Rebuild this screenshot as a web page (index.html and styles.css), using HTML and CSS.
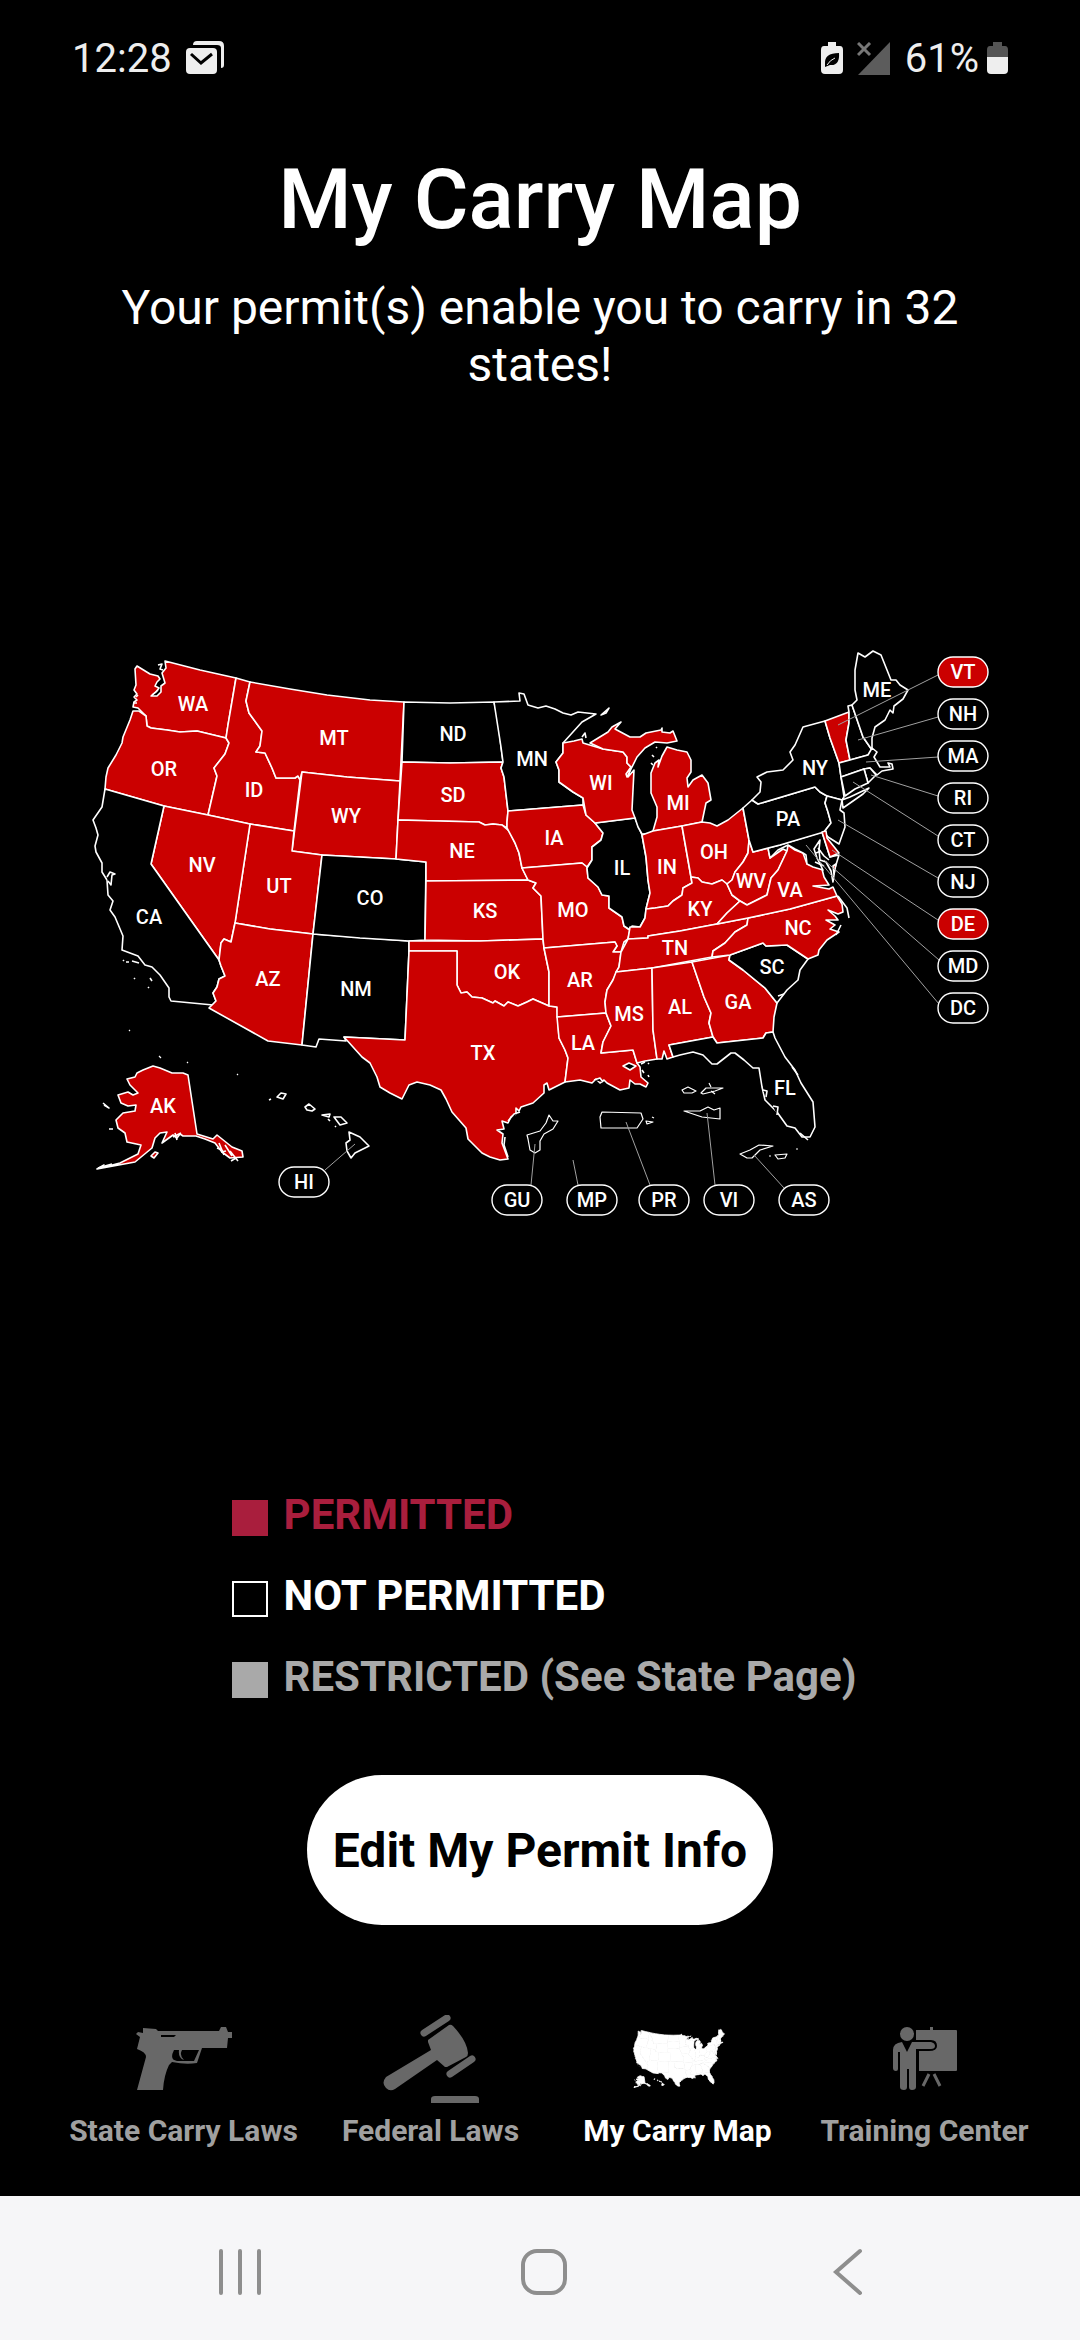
FILE: index.html
```
<!DOCTYPE html>
<html lang="en">
<head>
    <title>My Carry Map</title>
    <meta charset="UTF-8">
    <meta name="viewport" content="width=device-width, initial-scale=1">
    <link rel="stylesheet" href="styles.css">
</head>
<body>
    <div class="status-bar">
        <div class="status-side">
            <span>12:28</span>
            <svg class="status-mail" viewBox="0 0 38 34">
                <path d="M7 4 Q7 0 11 0 H33 Q38 0 38 5 V24 Q38 27 35 27 V7 Q35 4 31 4 Z" fill="#eee"/>
                <rect x="0" y="7" width="31" height="26" rx="4" fill="#eee"/>
                <path d="M5 13 L15 22 L26 13" fill="none" stroke="#000" stroke-width="3"/>
            </svg>
        </div>
        <div class="status-side">
            <svg class="status-saver" viewBox="0 0 22 32">
                <path d="M7 0 H15 V4 H19 Q22 4 22 8 V28 Q22 32 18 32 H4 Q0 32 0 28 V8 Q0 4 3 4 H7 Z" fill="#eee"/>
                <path d="M4 22 Q3 11 18 11 Q19 24 9 23 L4 25 Z" fill="#000"/>
                <path d="M6 23 Q9 18 14 16" fill="none" stroke="#eee" stroke-width="1"/>
            </svg>
            <svg class="status-signal" viewBox="0 0 34 33">
                <path d="M33 0 V33 H1 Z" fill="#5c5c5c"/>
                <path d="M1 1 L13 13 M13 1 L1 13" stroke="#777" stroke-width="3"/>
            </svg>
            <span>61%</span>
            <svg class="status-battery" viewBox="0 0 21 32">
                <path d="M6 0 H15 V4 H18 Q21 4 21 8 V15 H0 V8 Q0 4 3 4 H6 Z" fill="#555"/>
                <path d="M0 15 H21 V28 Q21 32 17 32 H4 Q0 32 0 28 Z" fill="#eee"/>
            </svg>
        </div>
    </div>

    <main>
        <h1>My Carry Map</h1>
        <p class="summary">Your permit(s) enable you to carry in 32 states!</p>

        <svg class="map" viewBox="0 640 1080 600" role="img" aria-label="Carry map of the United States">
            <g id="states">
                <!-- west -->
                <path class="on" d="M137 666 L135 669 L136 685 L134 690 L137 694 L134 697 L137 700 L134 702 L133 707 L138 708 L142 712 L146 716 L147 726 L151 728 L167 730 L180 732 L197 731 L226 738 L228 725 L236 678 L200 670 L165 661 L166 668 L162 673 L165 683 L161 686 L161 692 L157 696 L151 696 L156 692 L159 688 L155 686 L157 682 L160 679 L158 676 L150 674 Z"/>
                <path class="off" d="M158 665 L162 664 L160 669 L163 670 M133 703 L137 703 M152 695 L158 690 M136 697 L138 695"/>
                <path class="on" d="M133 711 L130 720 L123 737 L122 743 L116 755 L108 768 L106 777 L105 789 L164 806 L208 815 L217 776 L214 768 L225 754 L229 743 L226 738 L197 731 L180 732 L167 730 L151 728 L147 726 L146 716 L139 711 Z"/>
                <path class="on" d="M236 678 L250 682 L246 701 L249 713 L262 731 L260 746 L256 752 L265 753 L272 768 L276 778 L295 778 L298 776 L300 780 L294 831 L250 824 L208 815 L217 776 L214 768 L225 754 L229 743 L226 738 L228 725 Z"/>
                <path class="on" d="M250 682 L290 689 L327 695 L370 700 L404 702 L400 781 L347 777 L302 772 L300 780 L298 776 L295 778 L276 778 L272 768 L265 753 L256 752 L260 746 L262 731 L249 713 L246 701 Z"/>
                <path class="on" d="M302 772 L347 777 L400 781 L396 859 L322 855 L292 851 Z"/>
                <path class="on" d="M250 824 L294 831 L292 851 L322 855 L313 934 L270 929 L235 923 Z"/>
                <path class="on" d="M164 806 L208 815 L250 824 L235 923 L231 942 L224 939 L221 943 L219 960 L151 864 Z"/>
                <path class="off" d="M105 789 L164 806 L151 864 L219 960 L221 966 L225 976 L219 979 L217 987 L213 993 L216 1001 L213 1005 L171 1001 L169 997 L169 988 L160 975 L152 967 L145 965 L138 956 L122 950 L123 936 L115 917 L110 910 L113 901 L108 895 L107 880 L102 872 L102 863 L96 852 L95 846 L98 835 L96 828 L93 820 L102 807 Z"/>
                <path class="off" d="M107 877 L110 872 L115 874 L112 875 L111 885 L108 881"/>
                <path class="on" d="M235 923 L270 929 L313 934 L302 1045 L268 1041 L209 1008 L216 1001 L213 993 L217 987 L219 979 L225 976 L221 966 L219 960 L221 943 L224 939 L231 942 Z"/>
                <path class="off" d="M313 934 L409 941 L409 951 L405 1040 L344 1037 L346 1041 L319 1039 L316 1047 L302 1045 Z"/>
                <path class="off" d="M322 855 L396 859 L426 862 L425 940 L409 941 L360 938 L313 934 Z"/>
                <!-- plains -->
                <path class="off" d="M404 702 L450 703 L494 702 L498 720 L501 747 L503 762 L450 763 L402 762 Z"/>
                <path class="on" d="M402 762 L450 763 L503 762 L501 768 L504 777 L508 811 L507 822 L507 828 L502 825 L493 824 L485 825 L479 822 L398 820 Z"/>
                <path class="on" d="M398 820 L479 822 L485 825 L493 824 L502 825 L509 831 L515 843 L519 853 L522 868 L528 880 L426 881 L426 862 L396 859 Z"/>
                <path class="on" d="M426 881 L528 880 L536 883 L533 888 L541 896 L543 939 L480 941 L425 940 Z"/>
                <path class="on" d="M409 941 L480 941 L543 939 L544 948 L549 972 L549 1006 L533 999 L527 1002 L518 1006 L508 1002 L504 1006 L495 1001 L493 1003 L482 998 L472 997 L467 992 L461 993 L457 985 L457 951 L409 951 Z"/>
                <path class="on" d="M409 951 L457 951 L457 985 L461 993 L467 992 L472 997 L482 998 L493 1003 L495 1001 L504 1006 L508 1002 L518 1006 L527 1002 L533 999 L549 1006 L557 1007 L559 1038 L565 1050 L568 1058 L565 1082 L549 1090 L547 1083 L544 1085 L544 1093 L533 1103 L521 1107 L519 1111 L516 1108 L516 1114 L511 1117 L508 1123 L502 1121 L504 1129 L497 1130 L503 1134 L502 1143 L508 1159 L500 1160 L490 1157 L482 1153 L468 1139 L466 1128 L452 1112 L446 1099 L441 1090 L430 1085 L417 1082 L409 1085 L402 1099 L390 1093 L380 1087 L377 1077 L370 1063 L362 1057 L344 1037 L405 1040 Z"/>
                <path class="off" d="M505 1137 L504 1145 L508 1157 M508 1121 L514 1114 L520 1112"/>
                <!-- midwest -->
                <path class="off" d="M494 702 L520 701 L519 693 L524 694 L528 705 L538 708 L546 706 L555 709 L563 713 L571 715 L578 712 L596 714 L582 722 L563 743 L563 753 L556 762 L559 770 L559 782 L573 792 L583 798 L583 805 L508 811 L504 777 L501 768 L503 762 L501 747 Z"/>
                <path class="on" d="M508 811 L583 805 L586 815 L595 823 L603 833 L601 840 L592 847 L592 860 L587 867 L582 863 L522 868 L519 853 L515 843 L507 828 L507 822 Z"/>
                <path class="on" d="M522 868 L582 863 L587 867 L588 878 L598 887 L602 895 L609 896 L609 908 L622 917 L624 926 L630 930 L628 939 L624 942 L621 952 L613 952 L617 946 L615 942 L544 948 L543 939 L541 896 L533 888 L536 883 L528 880 Z"/>
                <path class="on" d="M544 948 L615 942 L617 946 L613 952 L621 952 L619 967 L613 980 L607 990 L605 1002 L606 1013 L557 1017 L557 1007 L549 1006 L549 972 Z"/>
                <path class="on" d="M557 1017 L606 1013 L611 1026 L603 1042 L601 1053 L633 1050 L637 1063 L640 1067 L641 1077 L648 1083 L646 1087 L640 1084 L635 1084 L630 1080 L629 1088 L620 1090 L607 1083 L604 1080 L600 1083 L596 1079 L592 1083 L580 1080 L565 1082 L568 1058 L565 1050 L559 1038 Z"/>
                <path class="off" d="M623 1066 L629 1063 L636 1066 L630 1070 Z M594 1080 L600 1078 L603 1082 M641 1064 L645 1062 M642 1070 L644 1073 M648 1063 L649 1064 M648 1075 L649 1077"/>
                <path class="off" d="M595 823 L635 818 L642 835 L646 857 L648 880 L650 893 L646 909 L645 918 L640 927 L632 926 L630 930 L624 926 L622 917 L609 908 L609 896 L602 895 L598 887 L588 878 L587 868 L592 860 L592 847 L601 840 L603 833 Z"/>
                <path class="on" d="M563 743 L574 741 L582 739 L583 743 L603 749 L623 752 L627 757 L627 763 L631 767 L628 777 L634 770 L633 790 L632 810 L635 818 L595 823 L586 815 L583 798 L573 792 L559 782 L559 770 L556 762 L563 753 Z"/>
                <path class="on" d="M590 743 L608 732 L612 727 L621 722 L615 729 L630 737 L640 737 L646 733 L661 730 L662 728 L662 732 L670 733 L673 731 L677 741 L667 743 L655 742 L645 748 L637 757 L627 777 L626 774 L631 767 L627 763 L627 757 L623 752 L603 749 Z"/>
                <path class="on" d="M667 747 L677 750 L687 752 L691 760 L691 772 L687 778 L688 787 L693 780 L702 775 L708 783 L711 800 L706 803 L702 822 L682 826 L653 831 L657 817 L657 807 L651 793 L651 773 L655 763 L659 760 L658 767 L662 756 Z"/>
                <path class="on" d="M601 715 L609 708 L606 713 Z"/>
                <path class="off" d="M656 747 L657 748 M652 755 L654 757 M651 763 L653 765 M582 737 L585 733 L586 738 M635 818 L638 827 L642 834 L648 834 L653 831"/>
                <path class="on" d="M642 835 L653 831 L682 826 L692 883 L683 888 L682 895 L673 901 L668 906 L655 908 L646 909 L650 893 L648 880 L646 857 Z"/>
                <path class="on" d="M682 826 L702 822 L710 823 L717 826 L728 820 L743 808 L749 840 L748 853 L743 862 L735 872 L732 880 L727 884 L722 880 L712 884 L702 882 L698 878 L691 877 Z"/>
                <path class="on" d="M630 927 L640 927 L645 918 L646 909 L655 908 L668 906 L673 901 L682 895 L683 888 L692 883 L691 877 L698 878 L702 882 L712 884 L722 880 L727 884 L732 895 L740 901 L727 913 L717 924 L680 931 L648 936 L648 938 L628 939 Z"/>
                <path class="on" d="M628 939 L648 938 L648 936 L680 931 L717 924 L748 918 L747 925 L735 932 L725 943 L713 951 L712 957 L652 968 L616 972 L619 967 L621 952 Z"/>
                <!-- south -->
                <path class="on" d="M616 972 L652 968 L653 1030 L657 1059 L645 1061 L637 1063 L633 1050 L601 1053 L603 1042 L611 1026 L606 1013 L605 1002 L607 990 L613 980 Z"/>
                <path class="on" d="M652 968 L692 962 L704 997 L711 1013 L709 1023 L713 1037 L669 1045 L673 1057 L667 1059 L664 1051 L662 1059 L657 1059 L653 1030 Z"/>
                <path class="on" d="M692 962 L730 955 L729 960 L743 970 L765 988 L777 1003 L774 1017 L773 1032 L766 1033 L763 1038 L717 1043 L713 1037 L709 1023 L711 1013 L704 997 Z"/>
                <path class="off" d="M669 1045 L713 1037 L717 1043 L763 1038 L766 1033 L773 1032 L775 1038 L785 1057 L795 1070 L801 1083 L813 1102 L815 1127 L810 1137 L802 1137 L795 1128 L787 1126 L777 1112 L765 1100 L762 1087 L759 1068 L753 1068 L744 1060 L735 1053 L731 1053 L717 1064 L712 1064 L703 1055 L693 1052 L680 1055 L673 1057 Z"/>
                <path class="off" d="M792 1067 L798 1075 M763 1090 L767 1091 L766 1097 M773 1106 L778 1107 L777 1115 M800 1133 L808 1140"/>
                <path class="off" d="M730 955 L763 943 L766 946 L787 945 L808 959 L800 970 L798 980 L787 990 L777 1003 L765 988 L743 970 L729 960 Z"/>
                <path class="on" d="M748 918 L790 909 L837 896 L842 904 L843 912 L838 914 L828 910 L835 916 L838 920 L826 920 L835 925 L830 929 L839 932 L827 940 L819 950 L818 955 L808 959 L787 945 L766 946 L763 943 L730 955 L712 957 L713 951 L725 943 L735 932 L747 925 Z"/>
                <path class="line" d="M838 896 L847 908 L849 918 M841 925 L836 935 M778 996 L784 994"/>
                <path class="on" d="M749 840 L753 852 L768 848 L770 858 L783 849 L787 851 L778 870 L771 878 L767 895 L747 905 L740 901 L732 895 L727 884 L732 880 L735 872 L743 862 L748 853 Z"/>
                <path class="on" d="M717 924 L727 913 L740 901 L747 905 L767 895 L771 878 L778 870 L787 851 L788 845 L795 850 L803 853 L807 864 L822 869 L824 877 L829 885 L813 886 L829 889 L833 887 L837 896 L790 909 L748 918 Z"/>
                <path class="off" d="M768 848 L780 845 L822 832 L830 857 L839 855 L835 868 L833 882 L831 871 L826 862 L820 860 L819 850 L820 840 L814 849 L817 858 L823 870 L813 867 L807 864 L806 855 L803 853 L795 849 L788 845 L778 850 L770 858 Z"/>
                <path class="line" d="M818 848 L824 856 L829 860 M815 862 L824 866 M816 853 L821 851"/>
                <path class="on" d="M833 866 L836 864 L834 874 Z"/>
                <!-- northeast -->
                <path class="off" d="M743 808 L752 800 L758 804 L815 787 L820 792 L827 796 L825 803 L828 812 L831 823 L824 832 L780 845 L753 852 L749 840 Z"/>
                <path class="off" d="M752 800 L760 792 L761 782 L757 777 L767 772 L783 770 L793 760 L790 752 L795 745 L803 727 L825 721 L830 738 L839 763 L841 777 L844 797 L842 800 L850 797 L869 788 L863 794 L843 808 L842 800 L827 796 L820 792 L815 787 L758 804 Z"/>
                <path class="on" d="M825 721 L849 712 L849 723 L846 740 L850 760 L839 763 L830 738 Z"/>
                <path class="off" d="M849 712 L848 706 L852 705 L863 737 L872 750 L868 755 L850 760 L846 740 L849 723 Z"/>
                <path class="off" d="M852 705 L857 700 L855 690 L855 670 L858 653 L865 657 L873 651 L881 655 L891 680 L896 680 L900 685 L908 690 L903 699 L894 706 L893 713 L890 710 L885 720 L875 727 L872 738 L872 750 L863 737 Z"/>
                <path class="off" d="M839 763 L850 760 L868 755 L872 748 L877 752 L874 757 L880 767 L890 767 L888 763 L892 764 L893 769 L882 771 L877 775 L870 768 L864 769 L841 777 Z"/>
                <path class="off" d="M864 769 L870 768 L876 775 L868 783 Z"/>
                <path class="off" d="M841 777 L864 769 L868 783 L855 789 L845 796 Z"/>
                <path class="off" d="M827 796 L842 800 L840 810 L844 813 L845 827 L839 844 L828 837 L824 832 L831 823 L828 812 L825 803 Z"/>
                <path class="on" d="M822 832 L826 831 L827 838 L839 853 L830 857 Z"/>
                <!-- alaska and hawaii -->
                <path class="on" d="M153 1066 L143 1070 L137 1073 L135 1077 L127 1079 L130 1085 L138 1093 L133 1095 L128 1092 L118 1095 L121 1103 L128 1106 L136 1105 L135 1111 L123 1113 L116 1120 L118 1128 L125 1133 L127 1142 L141 1145 L138 1154 L120 1163 L97 1169 L104 1165 L97 1169 L135 1162 L152 1148 L155 1138 L160 1133 L167 1132 L162 1143 L173 1135 L177 1138 L180 1134 L183 1136 L196 1136 L205 1139 L215 1143 L222 1152 L230 1158 L243 1157 L242 1151 L232 1147 L217 1135 L213 1139 L197 1134 L188 1075 L183 1073 L172 1073 L160 1068 Z"/>
                <path class="on" d="M151 1156 L155 1152 L158 1153 L154 1158 Z"/>
                <path class="line" d="M219 1143 L224 1155 M225 1145 L232 1156 M230 1151 L238 1161 M217 1148 L222 1150 M221 1152 L226 1151 M231 1161 L236 1158 M103 1103 L109 1108 L104 1105 M109 1129 L113 1129 M173 1137 L181 1133 M175 1133 L177 1140 M98 1168 L112 1164"/>
                <path class="off" d="M277 1097 L281 1093 L286 1094 L283 1099 Z M305 1107 L309 1104 L315 1109 L312 1111 L307 1110 Z M322 1115 L330 1114 L329 1117 Z M328 1119 L330 1121 M334 1117 L341 1117 L347 1123 L340 1125 Z M335 1126 L336 1127 M269 1100 L271 1099 M349 1132 L360 1137 L369 1146 L355 1153 L351 1158 L347 1151 L346 1143 L350 1140 Z"/>
                <path class="line" d="M123 960 L124 961 M126 962 L129 962 M132 961 L139 963 M134 978 L135 979 M150 978 L152 981 M148 987 L149 988"/>
            </g>

            <!-- outlying islands and territories -->
            <g class="territories">
                <path d="M129 1030 L130 1031 M159 1056 L161 1058 M187 1062 L188 1063 M237 1074 L238 1075"/>
                <path d="M549 1115 L553 1121 L558 1121 L553 1129 L544 1134 L540 1141 L540 1150 L535 1153 L530 1150 L528 1139 L527 1135 L540 1131 L546 1123 Z"/>
                <path d="M602 1112 L641 1113 L643 1119 L637 1128 L601 1128 L600 1117 Z M646 1121 L653 1122 L647 1124 Z M652 1117 L654 1118"/>
                <path d="M682 1090 L688 1087 L696 1091 L692 1093 L684 1093 Z M701 1093 L706 1088 L723 1088 L715 1091 L703 1094 Z M709 1083 L711 1087 M711 1091 L715 1094 M684 1111 L700 1111 L708 1107 L714 1110 L720 1108 L720 1119 L702 1117 Z"/>
                <path d="M740 1154 L750 1150 L759 1145 L773 1146 L760 1150 L752 1158 L747 1158 Z M775 1155 L787 1154 L785 1158 L778 1159 Z M796 1149 L798 1149 M769 1156 L771 1156"/>
            </g>

            <g class="leaders">
                <path d="M838 725 L938 675"/>
                <path d="M858 740 L938 717"/>
                <path d="M866 762 L938 757"/>
                <path d="M871 775 L938 796"/>
                <path d="M853 782 L938 836"/>
                <path d="M838 820 L938 878"/>
                <path d="M832 850 L938 920"/>
                <path d="M824 860 L939 960"/>
                <path d="M806 845 L939 1004"/>
                <path d="M355 1144 L325 1170"/>
                <path d="M535 1144 L531 1185"/>
                <path d="M573 1160 L578 1185"/>
                <path d="M626 1122 L650 1185"/>
                <path d="M707 1113 L715 1185"/>
                <path d="M754 1155 L784 1188"/>
            </g>

            <g class="pills">
                <rect class="on" x="938" y="657" width="50" height="30" rx="15"/>
                <rect x="938" y="699" width="50" height="30" rx="15"/>
                <rect x="938" y="741" width="50" height="30" rx="15"/>
                <rect x="938" y="783" width="50" height="30" rx="15"/>
                <rect x="938" y="825" width="50" height="30" rx="15"/>
                <rect x="938" y="867" width="50" height="30" rx="15"/>
                <rect class="on" x="938" y="909" width="50" height="30" rx="15"/>
                <rect x="938" y="951" width="50" height="30" rx="15"/>
                <rect x="938" y="993" width="50" height="30" rx="15"/>
                <rect x="279" y="1167" width="50" height="30" rx="15"/>
                <rect x="492" y="1185" width="50" height="30" rx="15"/>
                <rect x="567" y="1185" width="50" height="30" rx="15"/>
                <rect x="639" y="1185" width="50" height="30" rx="15"/>
                <rect x="704" y="1185" width="50" height="30" rx="15"/>
                <rect x="779" y="1185" width="50" height="30" rx="15"/>
            </g>

            <g class="labels">
                <text x="193" y="711">WA</text>
                <text x="164" y="776">OR</text>
                <text x="254" y="797">ID</text>
                <text x="334" y="745">MT</text>
                <text x="346" y="823">WY</text>
                <text x="202" y="872">NV</text>
                <text x="279" y="893">UT</text>
                <text x="370" y="905">CO</text>
                <text x="149" y="924">CA</text>
                <text x="268" y="986">AZ</text>
                <text x="356" y="996">NM</text>
                <text x="163" y="1113">AK</text>
                <text x="453" y="741">ND</text>
                <text x="532" y="766">MN</text>
                <text x="453" y="802">SD</text>
                <text x="601" y="790">WI</text>
                <text x="678" y="810">MI</text>
                <text x="462" y="858">NE</text>
                <text x="554" y="845">IA</text>
                <text x="622" y="875">IL</text>
                <text x="667" y="874">IN</text>
                <text x="485" y="918">KS</text>
                <text x="573" y="917">MO</text>
                <text x="507" y="979">OK</text>
                <text x="580" y="987">AR</text>
                <text x="483" y="1060">TX</text>
                <text x="583" y="1050">LA</text>
                <text x="629" y="1021">MS</text>
                <text x="680" y="1014">AL</text>
                <text x="675" y="955">TN</text>
                <text x="714" y="859">OH</text>
                <text x="788" y="826">PA</text>
                <text x="751" y="888">WV</text>
                <text x="790" y="897">VA</text>
                <text x="700" y="916">KY</text>
                <text x="798" y="935">NC</text>
                <text x="772" y="974">SC</text>
                <text x="738" y="1009">GA</text>
                <text x="785" y="1095">FL</text>
                <text x="815" y="775">NY</text>
                <text x="877" y="697">ME</text>
                <text x="963" y="679">VT</text>
                <text x="963" y="721">NH</text>
                <text x="963" y="763">MA</text>
                <text x="963" y="805">RI</text>
                <text x="963" y="847">CT</text>
                <text x="963" y="889">NJ</text>
                <text x="963" y="931">DE</text>
                <text x="963" y="973">MD</text>
                <text x="963" y="1015">DC</text>
                <text x="304" y="1189">HI</text>
                <text x="517" y="1207">GU</text>
                <text x="592" y="1207">MP</text>
                <text x="664" y="1207">PR</text>
                <text x="729" y="1207">VI</text>
                <text x="804" y="1207">AS</text>
            </g>
        </svg>

        <ul class="legend">
            <li class="permitted">PERMITTED</li>
            <li class="not-permitted">NOT PERMITTED</li>
            <li class="restricted">RESTRICTED (See State Page)</li>
        </ul>

        <button class="edit-button" type="button">Edit My Permit Info</button>
    </main>

    <nav class="tabs">
        <a href="#state-laws">
            <svg viewBox="0 0 96 88">
                <path fill-rule="evenodd" d="M7 13 L20 14 L22 16 H83 L85 12 H90 L92 17 H96 V23 H92 L91 33 H66 L61 48 Q50 50 36 47 L33 50 Q28 60 27 75 H1 L10 42 Q10 37 1 34 L4 22 L0 19 L2 17 L7 18 Z M25 20 V22 H38 L40 20 Z M38 35 Q33 45 41 46 L58 46 L63 35 H46 Q43 40 48 45 Q42 43 43 35 Z"/>
            </svg>
            <span>State Carry Laws</span>
        </a>
        <a href="#federal-laws">
            <svg viewBox="0 0 96 88">
                <path d="M41 18 L64 3 M67 59 L89 44" fill="none" stroke="#686868" stroke-width="7" stroke-linecap="round"/>
                <path d="M45 25 L66 10 Q68 9 70 11 Q84 26 85 38 Q85 41 83 42 L64 52 L62 52 L54 45 L12 74 Q7 77 3 73 Q-2 68 3 62 L48 35 L45 27 Z"/>
                <path d="M48 88 V84 Q48 81 52 81 H92 Q96 81 96 84 V88 Z"/>
            </svg>
            <span>Federal Laws</span>
        </a>
        <a href="#carry-map" class="active">
            <svg viewBox="62 522 860 788">
                <use href="#states"/>
            </svg>
            <span>My Carry Map</span>
        </a>
        <a href="#training">
            <svg viewBox="0 0 96 88">
                <path d="M53 15 V12 H56 V15 H79 Q80 15 80 16 V55 Q80 56 79 56 H42 V36 H52 Q60 36 60 31 Q60 25 54 25 H39 L39 15 Z"/>
                <circle cx="30" cy="19" r="7"/>
                <path d="M25 27 L30 37 L35 27 H54 Q58 28 58 31 Q58 34 54 34 H39 V72 Q39 75 35 75 Q32 75 32 72 V54 H30 V72 Q30 75 27 75 Q23 75 23 72 V37 H21 V54 Q21 56 19 56 Q16 56 16 53 V35 Q16 28 25 27 Z"/>
                <path d="M52 59 L46 71 M57 59 L63 71" stroke="#686868" stroke-width="3"/>
            </svg>
            <span>Training Center</span>
        </a>
    </nav>

    <div class="system-nav">
        <button type="button" aria-label="Recents">
            <svg viewBox="0 0 48 48"><path d="M5 3 V45 M24 3 V45 M43 3 V45"/></svg>
        </button>
        <button type="button" aria-label="Home">
            <svg viewBox="0 0 48 48"><rect x="3" y="3" width="42" height="42" rx="14"/></svg>
        </button>
        <button type="button" aria-label="Back">
            <svg viewBox="0 0 48 48"><path d="M36 3 L12 24 L36 45"/></svg>
        </button>
    </div>
</body>
</html>
```

FILE: styles.css
```
*,
*::before {
    box-sizing: border-box;
}
body {
    margin: 0;
    min-height: 100vh;
    display: flex;
    flex-direction: column;
    background: #000;
    color: #fff;
    font-family: Roboto, sans-serif;
}
.status-bar {
    display: flex;
    justify-content: space-between;
    align-items: center;
    height: 116px;
    padding: 0 72px;
    font-size: 40px;
    color: #eee;
}
.status-side {
    display: flex;
    align-items: center;
    gap: 14px;
}
.status-mail {
    width: 38px;
    height: 34px;
}
.status-saver {
    width: 22px;
    height: 32px;
}
.status-signal {
    width: 34px;
    height: 33px;
}
.status-battery {
    width: 21px;
    height: 32px;
    margin-left: -6px;
}
main {
    flex: 1;
    display: flex;
    flex-direction: column;
    align-items: center;
}
h1 {
    margin: 34px 0 0;
    font-size: 84px;
    font-weight: 500;
    line-height: 100px;
}
.summary {
    margin: 29px 0 0;
    padding: 0 80px;
    font-size: 48px;
    line-height: 57px;
    text-align: center;
}
.map {
    width: 100%;
    margin-top: 247px;
    stroke-linejoin: round;
}
#states path {
    stroke: #fff;
    stroke-width: var(--border, 1.6);
}
.on {
    fill: var(--land, #cb0000);
}
.off {
    fill: var(--land, #000);
}
.line {
    fill: none;
}
.territories path {
    fill: #000;
    stroke: #fff;
    stroke-width: 1.2;
}
.leaders path {
    stroke: #a0a0a0;
    stroke-width: 1;
}
.pills rect {
    stroke: #fff;
    stroke-width: 1.4;
}
.labels text {
    fill: #fff;
    font-size: 20px;
    font-weight: 500;
    text-anchor: middle;
}
.legend {
    list-style: none;
    margin: 250px 0 0;
    padding: 0 0 0 8px;
    font-size: 42px;
    font-weight: 700;
}
.legend li {
    display: flex;
    align-items: center;
    gap: 16px;
    line-height: 49px;
    margin-bottom: 32px;
}
.legend li::before {
    content: "";
    width: 36px;
    height: 36px;
    margin-top: 7px;
    border: 2px solid currentColor;
}
.permitted {
    color: #a91e3d;
}
.permitted::before,
.restricted::before {
    background: currentColor;
}
.restricted {
    color: #a9a9a9;
}
.edit-button {
    margin-top: 42px;
    width: 466px;
    height: 150px;
    border: none;
    border-radius: 75px;
    background: #fff;
    color: #000;
    font-family: inherit;
    font-size: 48px;
    font-weight: 700;
}
.tabs {
    display: grid;
    grid-template-columns: repeat(4, 1fr);
    padding: 0 32px 48px 60px;
}
.tabs a {
    display: flex;
    flex-direction: column;
    align-items: center;
    gap: 11px;
    color: #a0a0a0;
    font-size: 30px;
    font-weight: 700;
    line-height: 34px;
    text-decoration: none;
    white-space: nowrap;
}
.tabs svg {
    width: 96px;
    height: 88px;
    fill: #686868;
}
.tabs .active {
    --land: #fff;
    --border: 7;
    color: #fff;
}
.system-nav {
    display: grid;
    grid-template-columns: repeat(3, 1fr);
    height: 144px;
    padding: 0 80px 0 88px;
    background: #f6f6f8;
}
.system-nav button {
    display: flex;
    align-items: center;
    justify-content: center;
    padding: 8px 0 0;
    border: none;
    background: none;
}
.system-nav svg {
    width: 48px;
    height: 48px;
    fill: none;
    stroke: #8e8e8e;
    stroke-width: 4;
    stroke-linecap: round;
}
```
